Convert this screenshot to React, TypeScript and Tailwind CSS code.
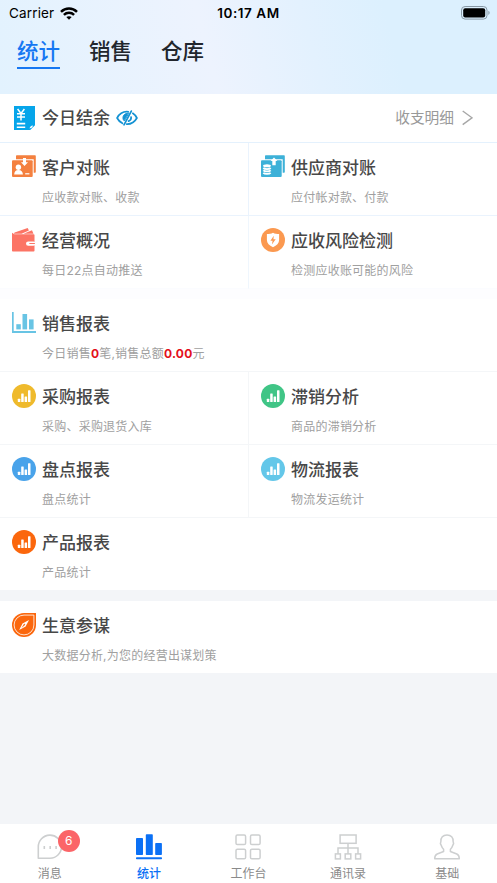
import { useState } from 'react';
import type { ReactNode } from 'react';

interface ReportItem {
  icon: ReactNode;
  title: string;
  desc: ReactNode;
}

interface TabItem {
  label: string;
  icon: ReactNode;
  badge?: number;
}

// Round icon with four bars, used by most of the reports
function BarsIcon({ color }: { color: string }) {
  return (
    <svg viewBox="0 0 24 24" className="size-6">
      <circle cx="12" cy="12" r="12" fill={color} />
      <g fill="#fff">
        <rect x="5.8" y="14.8" width="2.5" height="3.2" rx="0.5" />
        <rect x="9.2" y="9.4" width="2.5" height="8.6" rx="0.5" />
        <rect x="12.6" y="12.6" width="2.5" height="5.4" rx="0.5" />
        <rect x="16" y="6.2" width="2.5" height="11.8" rx="0.5" />
      </g>
    </svg>
  );
}

function BillIcon() {
  return (
    <svg viewBox="0 0 24 24" className="size-6" fill="none">
      <path d="M2 0h21v19.2L18.2 24H2z" fill="#06a5ea" />
      <path d="M17.6 22.6c.2-2 1.2-3 3.4-3.2l-.8 2.2z" fill="#fff" />
      <path d="M5.6 3l3.4 4.5L12.4 3M5 7.8h8M5 11h8M9 7.5v7" stroke="#fff" strokeWidth="1.5" />
      <path d="M4.8 17.6h8.4M4.8 21.2h8.4" stroke="#fff" strokeWidth="1.6" />
    </svg>
  );
}

function HiddenEyeIcon() {
  return (
    <svg viewBox="0 0 22 16" className="w-[22px] h-4" fill="none" stroke="#1492d3" strokeWidth="1.7" strokeLinecap="round">
      <path d="M12.3 1.8C6.9 1.2 3.1 4.3 1.1 8c1.2 2.3 3 4.2 5.3 5.3" />
      <path d="M16.8 3.3c1.7 1.1 3.1 2.8 4.1 4.7-2.2 3.9-5.8 6.3-10.2 6.1" />
      <path d="M15.3 1.1L8 14.8" />
      <path d="M12.2 3.4c-3.4-.2-5.4 1.8-5.2 4.8 0 1.1.4 1.9 1.1 2.5z" fill="#1492d3" strokeWidth="1" />
      <path d="M15.1 7c.3 1.9-.8 3.5-2.5 4.1" />
    </svg>
  );
}

function CustomerIcon() {
  return (
    <svg viewBox="0 0 24 24" className="size-6" fill="none">
      <path d="M4 4.2V1.2c0-.6.4-1 1-1h17.8c.6 0 1 .4 1 1v15.6c0 .6-.4 1-1 1h-1.1V4.2z" fill="#f4803f" />
      <rect x="0" y="5.2" width="20.7" height="16.8" rx="1" fill="#f4803f" />
      <path d="M11 3h3v4.3h2L12.5 11 9 7.3h2z" fill="#fff" />
      <circle cx="6.4" cy="12.2" r="2.7" fill="#fff" />
      <path d="M2.2 19.5c0-2.7 1.4-4.5 4.2-4.5s4.5 1.8 4.5 4.5z" fill="#fff" />
      <path d="M13.2 18.8h4.2" stroke="#fff" strokeWidth="1.2" />
    </svg>
  );
}

function SupplierIcon() {
  return (
    <svg viewBox="0 0 24 24" className="size-6" fill="none">
      <path d="M4 4.2V1.2c0-.6.4-1 1-1h17.8c.6 0 1 .4 1 1v15.6c0 .6-.4 1-1 1h-1.1V4.2z" fill="#3db1d8" />
      <rect x="0" y="5.2" width="20.7" height="16.8" rx="1" fill="#3db1d8" />
      <path d="M11.3 10.3V6H9.6L13 2.4 16.4 6h-1.7v4.3z" fill="#fff" />
      <ellipse cx="6" cy="10.7" rx="3.9" ry="1.5" fill="#fff" />
      <path
        d="M2.3 13c1.4 1.4 6 1.4 7.4 0M2.3 15.4c1.4 1.4 6 1.4 7.4 0M2.3 17.8c1.4 1.4 6 1.4 7.4 0"
        stroke="#fff"
        strokeWidth="1.8"
      />
    </svg>
  );
}

function WalletIcon() {
  return (
    <svg viewBox="0 0 24 24" className="size-6">
      <path d="M2.6 4.6L15.7 0l1.2 2.5-7.3 3.2H1.8z" fill="#fc7465" />
      <path d="M11.5 5.7L20 2.3l1.5 3.4z" fill="#fc7465" />
      <path d="M0 4.8l2.4 1.5h19.3c.5 0 .8.3.8.8v15.7c0 .5-.3.8-.8.8H.8c-.5 0-.8-.3-.8-.8z" fill="#fc7465" />
      <rect x="14" y="13.4" width="9.6" height="4.4" rx="2.2" fill="#fff" />
      <rect x="17.2" y="15.1" width="5.8" height="1" rx="0.5" fill="#fc7465" />
    </svg>
  );
}

function ShieldIcon() {
  return (
    <svg viewBox="0 0 24 24" className="size-6">
      <circle cx="12" cy="12" r="12" fill="#fb9950" />
      <path d="M12 4.7c1.9 1.1 3.9 1.4 6.1 1.4v6c0 3.3-2.4 5.6-6.1 7.2-3.7-1.6-6.1-3.9-6.1-7.2v-6c2.2 0 4.2-.3 6.1-1.4z" fill="#fff" />
      <path d="M12.8 7.8l-3.4 5h2.2l-.7 3.7 3.8-5.3h-2.3z" fill="#fb9950" />
    </svg>
  );
}

function SalesIcon() {
  return (
    <svg viewBox="0 0 24 24" className="size-6" fill="#68c4e4">
      <path d="M0 1h1.7v19.1H24V22H0z" />
      <rect x="4.3" y="13.2" width="4.5" height="5.2" />
      <rect x="10.5" y="3" width="4.6" height="15.4" />
      <rect x="17" y="8.4" width="4.6" height="10" />
    </svg>
  );
}

function CompassIcon() {
  return (
    <svg viewBox="0 0 24 24" className="size-6">
      <path d="M12 0h12v12A12 12 0 1 1 12 0z" fill="#fb670d" />
      <path d="M12 2.1h9.9V12A9.9 9.9 0 1 1 12 2.1z" fill="none" stroke="#fff" strokeWidth="0.8" />
      <path d="M17 7l-3.4 6.4L7.2 17l3.3-6.5z" fill="#fff" />
      <path d="M12.2 10.6l1.1 1.1-3.8 3.2z" fill="#fb670d" />
    </svg>
  );
}

const iconClass = 'size-7';

const tabs: TabItem[] = [
  {
    label: '消息',
    badge: 6,
    icon: (
      <svg viewBox="0 0 28 28" className={iconClass} fill="none" stroke="#cdcfd0" strokeWidth="1.6">
        <path d="M2.3 25.3V14A11.6 11.6 0 1 1 14 25.3z" strokeLinejoin="round" />
        <path d="M8.3 13v3M14.2 13v3M20.1 13v3" />
      </svg>
    ),
  },
  {
    label: '统计',
    icon: (
      <svg viewBox="0 0 28 28" className={iconClass} fill="#0b70f5">
        <rect x="1" y="5" width="7" height="17" rx="0.8" />
        <rect x="10.8" y="1.2" width="7" height="20.8" rx="0.8" />
        <rect x="20.2" y="10" width="6.7" height="12" rx="0.8" />
        <rect x="1" y="24.3" width="26" height="2" rx="0.7" />
      </svg>
    ),
  },
  {
    label: '工作台',
    icon: (
      <svg viewBox="0 0 28 28" className={iconClass} fill="none" stroke="#cdcfd0" strokeWidth="1.5">
        <rect x="2" y="2" width="9.6" height="9.6" rx="1.4" />
        <rect x="16.5" y="2" width="9.6" height="9.6" rx="1.4" />
        <rect x="2" y="16.2" width="9.6" height="9.6" rx="1.4" />
        <rect x="16.5" y="16.2" width="9.6" height="9.6" rx="1.4" />
      </svg>
    ),
  },
  {
    label: '通讯录',
    icon: (
      <svg viewBox="0 0 28 28" className={iconClass} fill="none" stroke="#cdcfd0" strokeWidth="1.5">
        <rect x="6.1" y="2" width="16" height="8.3" />
        <path d="M14 10.3v10.6M4 20.9v-6h20v6" />
        <rect x="1.4" y="20.9" width="5" height="5" />
        <rect x="11.2" y="20.9" width="5.6" height="5" />
        <rect x="21.6" y="20.9" width="5" height="5" />
      </svg>
    ),
  },
  {
    label: '基础',
    icon: (
      <svg viewBox="0 0 28 28" className={iconClass} fill="none" stroke="#cdcfd0" strokeWidth="1.5" strokeLinejoin="round">
        <path d="M14 1.9c-4.2 0-6.3 2.8-6.1 6.4l-.5 2.4 1.1 2.2c.5 1.5 1.2 2.6 2.1 3.4v2.2L4.2 21c-1.7.7-2.5 1.7-2.5 4.8h24.6c0-3.1-.8-4.1-2.5-4.8l-6.4-2.5v-2.2c.9-.8 1.6-1.9 2.1-3.4l1.1-2.2-.5-2.4c.2-3.6-1.9-6.4-6.1-6.4z" />
      </svg>
    ),
  },
];

const accountItems: ReportItem[] = [
  { icon: <CustomerIcon />, title: '客户对账', desc: '应收款对账、收款' },
  { icon: <SupplierIcon />, title: '供应商对账', desc: '应付帐对款、付款' },
  { icon: <WalletIcon />, title: '经营概况', desc: '每日22点自动推送' },
  { icon: <ShieldIcon />, title: '应收风险检测', desc: '检测应收账可能的风险' },
];

const reportItems: ReportItem[] = [
  { icon: <BarsIcon color="#efba2c" />, title: '采购报表', desc: '采购、采购退货入库' },
  { icon: <BarsIcon color="#40c586" />, title: '滞销分析', desc: '商品的滞销分析' },
  { icon: <BarsIcon color="#49a3ea" />, title: '盘点报表', desc: '盘点统计' },
  { icon: <BarsIcon color="#64c7e9" />, title: '物流报表', desc: '物流发运统计' },
];

function Cell({ icon, title, desc }: ReportItem) {
  return (
    <div className="h-full pt-3 pl-3">
      <div className="flex h-6 items-center gap-1.5">
        {icon}
        <span className="pt-0.5 text-[17px] leading-6 font-medium text-[#484848]">{title}</span>
      </div>
      <div className="mt-[9px] pl-[30px] text-[12px] leading-5 tracking-[0.22px] text-[#a0a0a0]">{desc}</div>
    </div>
  );
}

function CellGrid({ items, line }: { items: ReportItem[]; line: string }) {
  return (
    <div className="grid grid-cols-[249px_1fr]">
      {items.map((item, i) => (
        <div key={item.title} className={`h-[73px] border-b ${i % 2 === 0 ? 'border-r' : ''} ${line}`}>
          <Cell {...item} />
        </div>
      ))}
    </div>
  );
}

function StatusBar() {
  return (
    <div className="grid h-[26px] grid-cols-3 items-center px-[9px] text-[13.5px] text-black">
      <div className="flex items-center gap-1.5">
        <span className="tracking-[0.15px]">Carrier</span>
        <svg viewBox="0 0 18 13" className="w-[18px] h-[13px]" fill="none" stroke="#000" strokeWidth="2.5">
          <path d="M1 4.9c4.5-4.4 11.5-4.4 16 0M3.9 7.9c2.9-2.8 7.3-2.8 10.2 0" />
          <path d="M9 12.8l-2.7-2.7c1.5-1.3 3.9-1.3 5.4 0z" fill="#000" stroke="none" />
        </svg>
      </div>
      <div className="text-center font-semibold tracking-[0.55px] whitespace-nowrap">10:17 AM</div>
      <svg viewBox="0 0 30 14" className="h-3.5 w-[30px] justify-self-end -mr-[3px]">
        <rect x="0.5" y="0.5" width="25.5" height="12.6" rx="3.6" fill="none" stroke="#8798a5" />
        <rect x="2.2" y="2.2" width="22" height="9.3" rx="2" fill="#000" />
        <path d="M27.4 4.7c1.6.7 1.6 3.5 0 4.2z" fill="#8798a5" />
      </svg>
    </div>
  );
}

export default function App() {
  const [section, setSection] = useState('统计');
  const [activeTab, setActiveTab] = useState('统计');

  return (
    <div className="flex h-[883px] w-[497px] flex-col overflow-hidden bg-[#f3f5f8] font-[Inter,'Noto_Sans_CJK_SC',sans-serif]">
      <header className="h-[94px] bg-[linear-gradient(75deg,#e2f2fe_0%,#edf3fe_42%,#e3f1fe_62%,#dcf0fe_78%,#dcf0fe_100%)]">
        <StatusBar />
        <nav className="flex gap-[29px] pt-[9px] pl-[17px]">
          {['统计', '销售', '仓库'].map(name => (
            <button
              key={name}
              onClick={() => setSection(name)}
              className={`h-[34px] w-[43px] border-b-2 text-[21.5px] leading-8 font-medium whitespace-nowrap ${
                section === name ? 'border-[#1677f2] text-[#1677f2]' : 'border-transparent text-[#22262d]'
              }`}
            >
              {name}
            </button>
          ))}
        </nav>
      </header>

      <main className="flex-1">
        {/* Balance of the day */}
        <div className="flex h-[49px] items-center border-b border-[#e4f1fd] bg-white pr-6 pl-3">
          <BillIcon />
          <span className="ml-1.5 pt-0.5 text-[17px] font-medium text-[#484848]">今日结余</span>
          <span className="ml-1.5">
            <HiddenEyeIcon />
          </span>
          <span className="ml-auto pt-px text-[14.7px] text-[#999]">收支明细</span>
          <svg viewBox="0 0 11 16" className="ml-2 h-4 w-[11px]" fill="none" stroke="#a6a6a6" strokeWidth="1.4">
            <path d="M0.7 1l9.3 6.8-9.3 6.8" />
          </svg>
        </div>

        <div className="bg-white">
          <CellGrid items={accountItems.slice(0, 2)} line="border-[#eaf3fd]" />
          <CellGrid items={accountItems.slice(2)} line="border-r-[#eff6fd] border-b-[#fbfcff]" />
        </div>
        <div className="h-[10px] bg-[#fdfdff]" />

        <div className="h-[73px] border-b border-[#f4f6f8] bg-white">
          <Cell
            icon={<SalesIcon />}
            title="销售报表"
            desc={
              <>
                今日销售<b className="text-[#e3101c]">0</b>笔,销售总额<b className="text-[#e3101c]">0.00</b>元
              </>
            }
          />
        </div>
        <div className="bg-white">
          <CellGrid items={reportItems} line="border-[#f4f6f8]" />
        </div>
        <div className="h-[72px] bg-white">
          <Cell icon={<BarsIcon color="#fb670d" />} title="产品报表" desc="产品统计" />
        </div>

        <div className="mt-[11px] h-[72px] bg-white">
          <Cell icon={<CompassIcon />} title="生意参谋" desc="大数据分析,为您的经营出谋划策" />
        </div>
      </main>

      <footer className="grid h-[59px] grid-cols-5 bg-white">
        {tabs.map(tab => (
          <button key={tab.label} onClick={() => setActiveTab(tab.label)} className="flex flex-col items-center pt-[9px]">
            <span className="relative">
              {tab.icon}
              {tab.badge && (
                <span className="absolute -top-[3px] left-[22px] flex size-[22px] items-center justify-center rounded-full bg-[#fb6568] text-[12px] text-white">
                  {tab.badge}
                </span>
              )}
            </span>
            <span
              className={`mt-1 text-[12px] leading-[18px] ${
                activeTab === tab.label ? 'font-medium text-[#0b70f5]' : 'text-[#8a8a8a]'
              }`}
            >
              {tab.label}
            </span>
          </button>
        ))}
      </footer>
    </div>
  );
}
